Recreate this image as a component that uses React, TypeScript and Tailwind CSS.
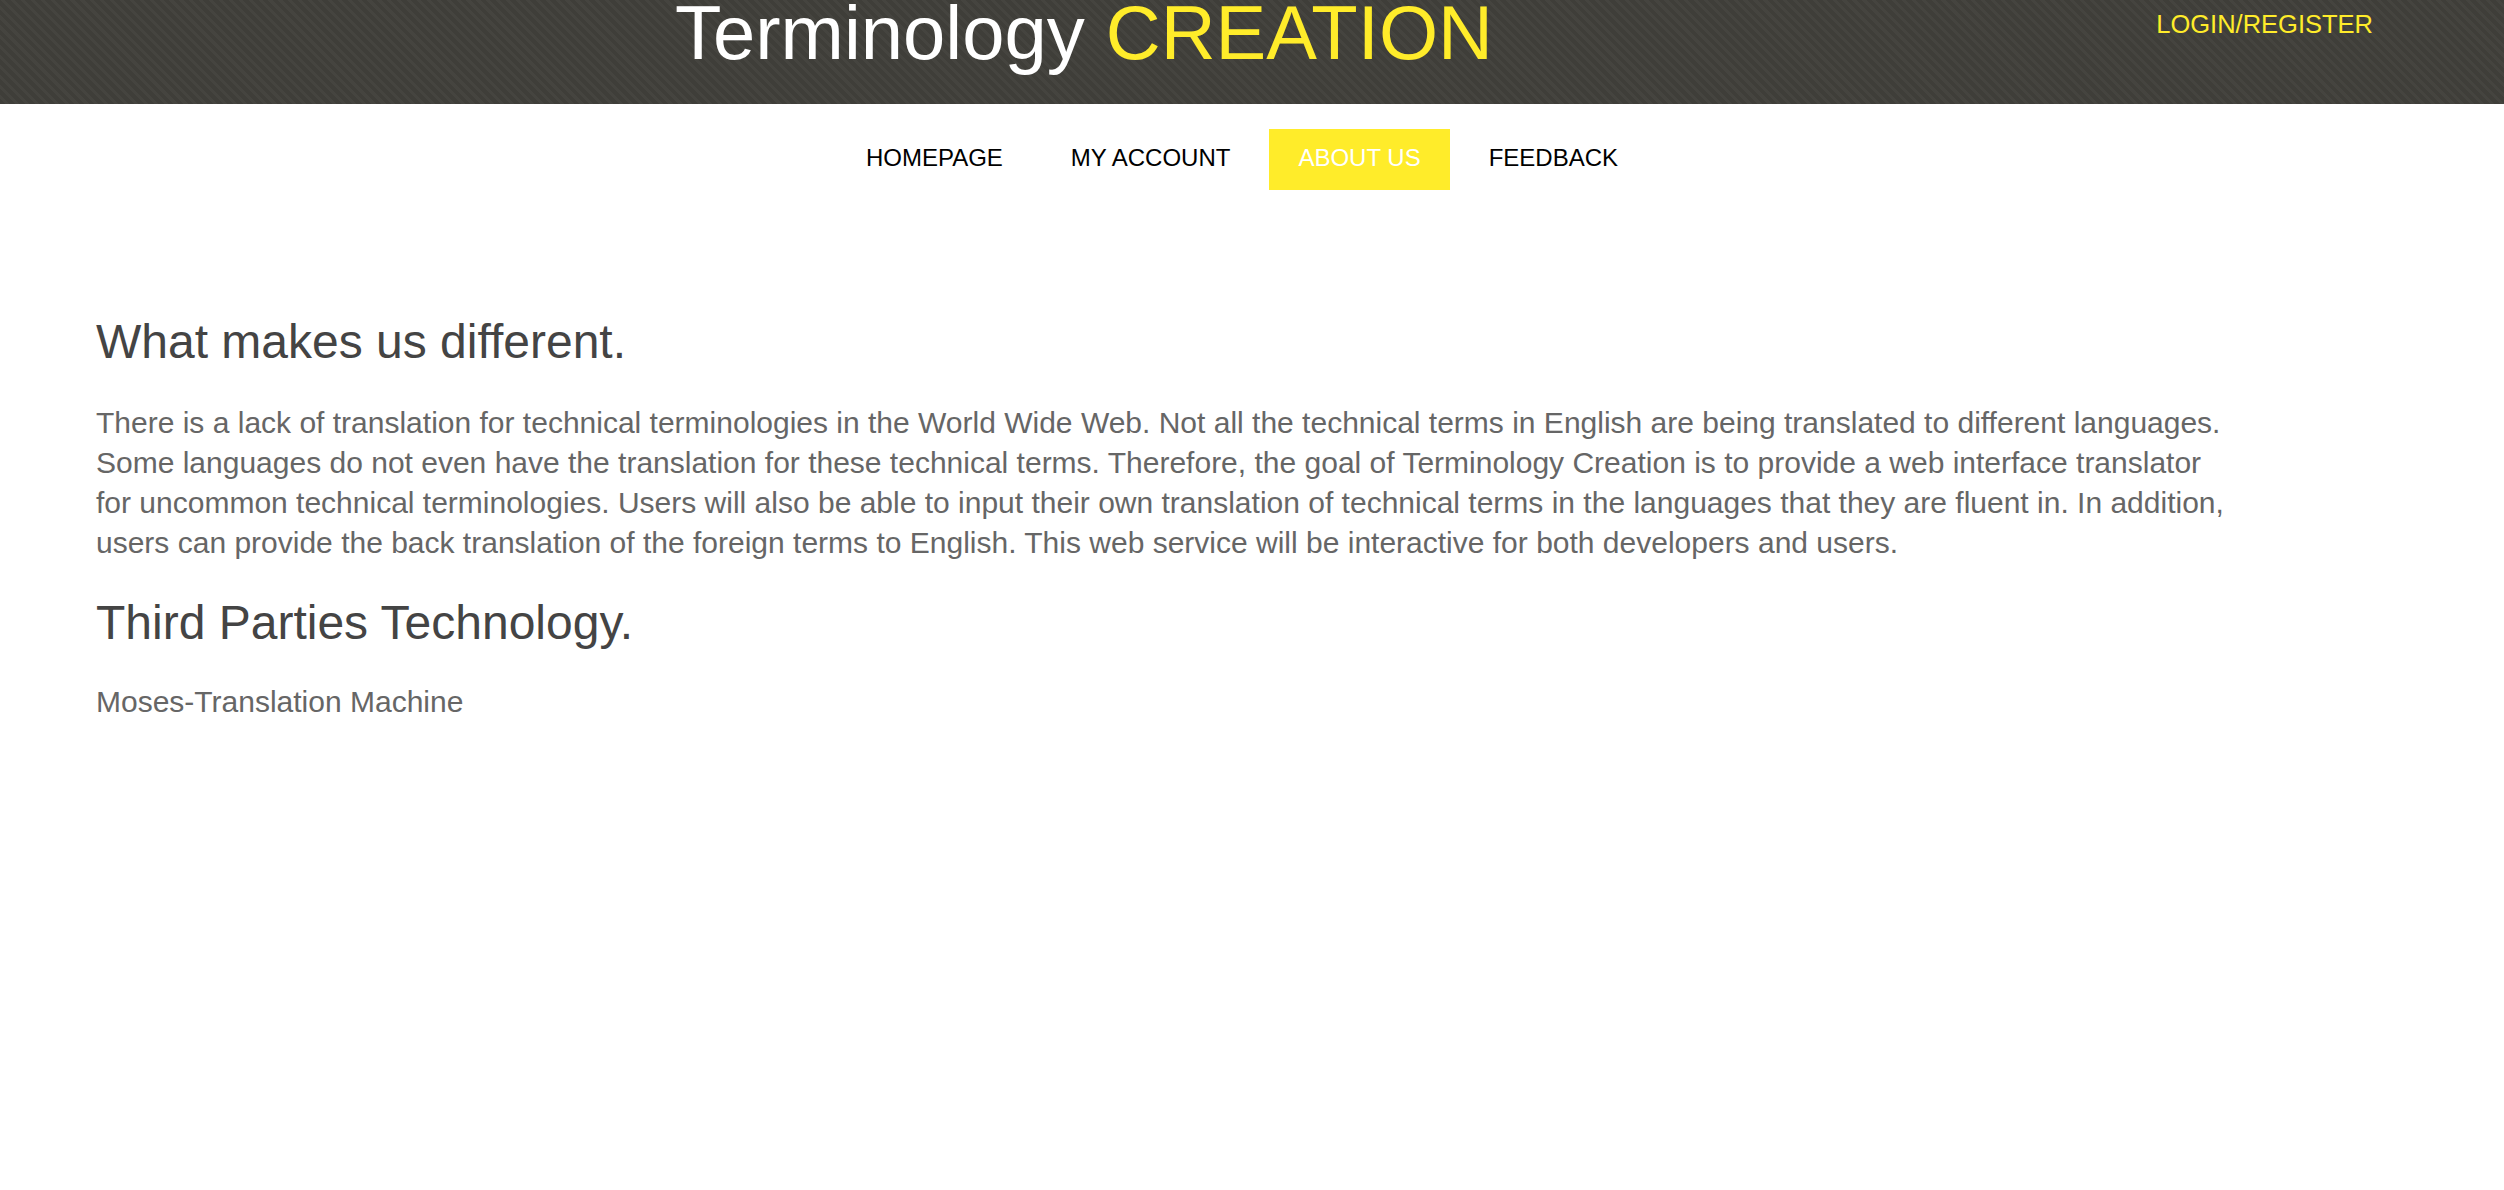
const FONT = "font-['Liberation_Sans',Arial,sans-serif]";

const NAV = [
  { label: "HOMEPAGE", active: false },
  { label: "MY ACCOUNT", active: false },
  { label: "ABOUT US", active: true },
  { label: "FEEDBACK", active: false },
];

export default function App() {
  return (
    <div className={`min-h-screen bg-white ${FONT}`}>
      {/* Header bar */}
      <header className="flex h-[104px] items-start justify-between overflow-hidden bg-[#3f3e39] bg-[repeating-linear-gradient(45deg,#3f3e39_0px,#3f3e39_4px,#45443f_4px,#45443f_7px)] pl-[675px] pr-[131px]">
        <h1 className="-mt-[5px] whitespace-nowrap text-[76px] leading-none text-white">
          Terminology <span className="text-[#ffec2a]">CREATION</span>
        </h1>
        <a href="#" className="mt-[12px] text-[25.5px] leading-none text-[#ffec2a]">
          LOGIN/REGISTER
        </a>
      </header>

      {/* Nav */}
      <nav className="mt-[25px] flex justify-center gap-[10px] pr-[20px]">
        {NAV.map((item) => (
          <a
            key={item.label}
            href="#"
            className={`flex h-[61px] items-center px-[29px] pb-[3px] text-[24px] leading-none ${
              item.active ? "bg-[#ffec2a] text-white" : "text-black"
            }`}
          >
            {item.label}
          </a>
        ))}
      </nav>

      {/* Content */}
      <main className="mt-[128px] px-[96px]">
        <h2 className="text-[48px] leading-none text-[#444444]">What makes us different.</h2>
        <p className="mt-[37px] whitespace-nowrap text-[30px] leading-[40px] text-[#666666]">
          There is a lack of translation for technical terminologies in the World Wide Web. Not all the technical terms in English are being translated to different languages.
          <br />
          Some languages do not even have the translation for these technical terms. Therefore, the goal of Terminology Creation is to provide a web interface translator
          <br />
          for uncommon technical terminologies. Users will also be able to input their own translation of technical terms in the languages that they are fluent in. In addition,
          <br />
          users can provide the back translation of the foreign terms to English. This web service will be interactive for both developers and users.
        </p>
        <h2 className="mt-[36px] text-[48px] leading-none text-[#444444]">Third Parties Technology.</h2>
        <p className="mt-[35px] text-[30px] leading-[40px] text-[#666666]">Moses-Translation Machine</p>
      </main>
    </div>
  );
}
